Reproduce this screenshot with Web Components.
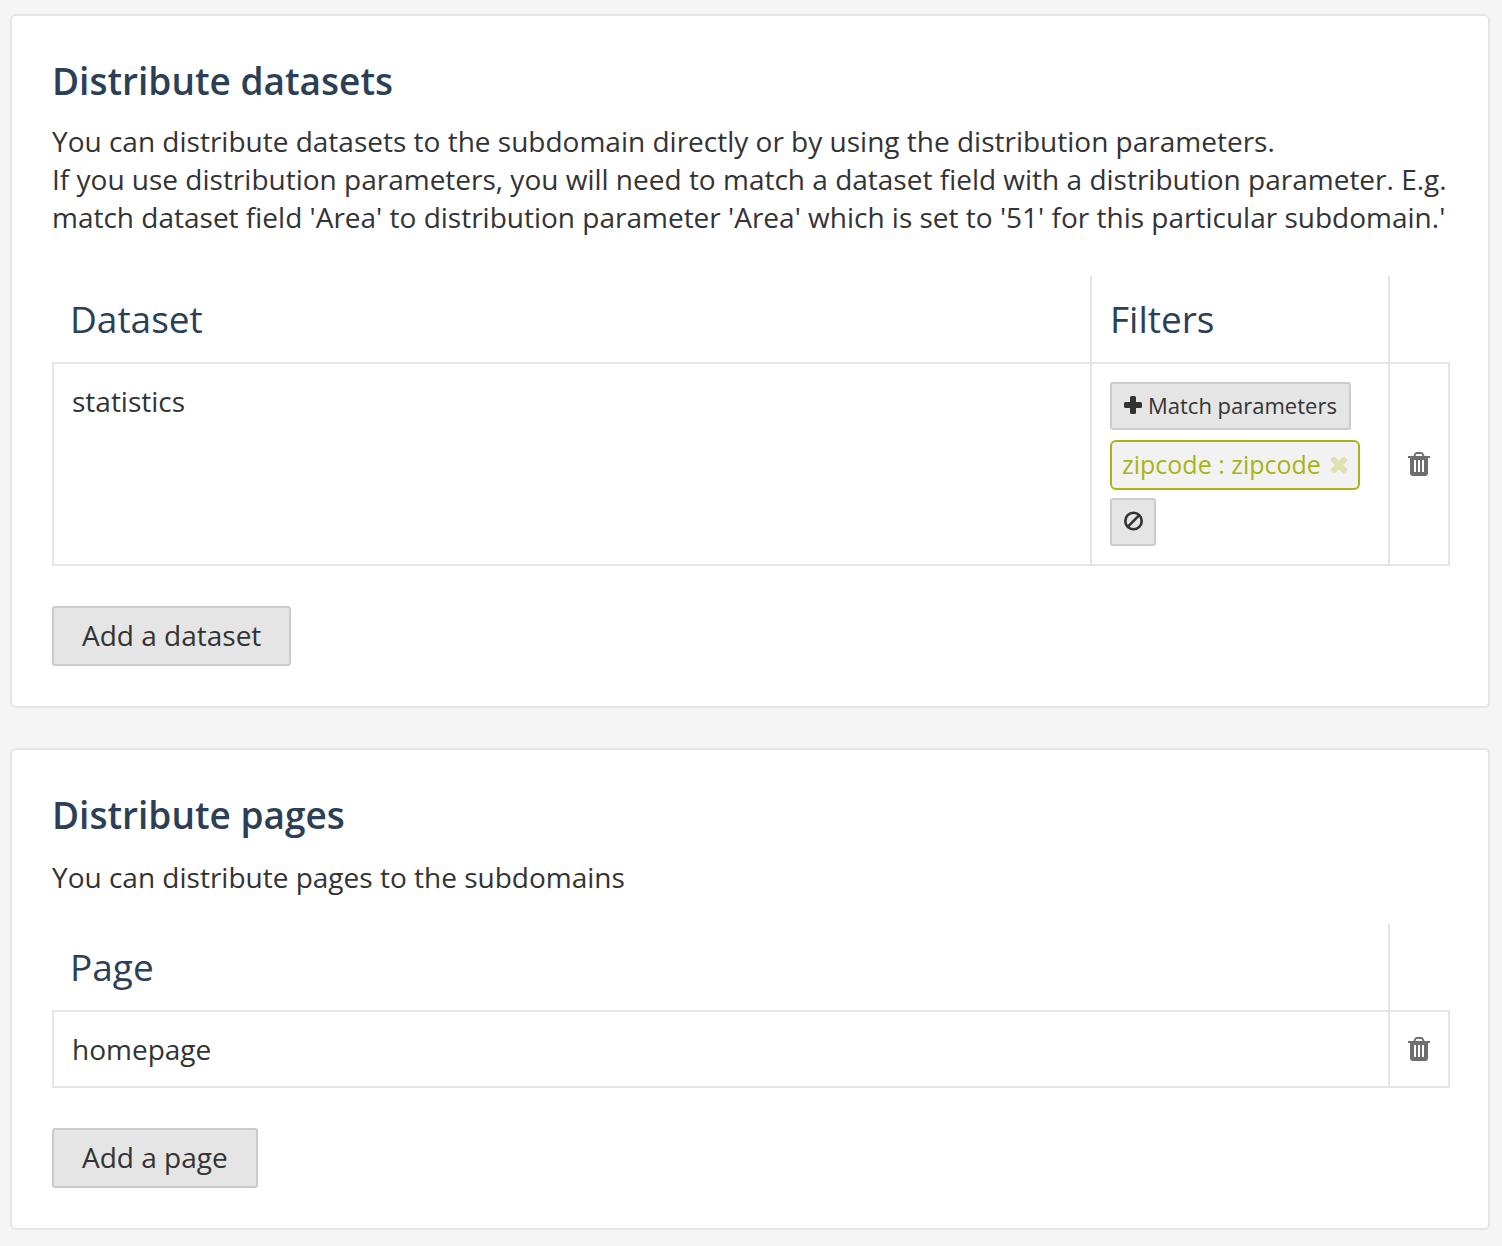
<!DOCTYPE html>
<html lang="en">
<head>
<meta charset="utf-8">
<meta name="viewport" content="width=device-width, initial-scale=1">
<title>Distribution</title>
<style>
  body {
    margin: 0;
    background: #f5f5f5;
    color: #333;
    font: 28px/38px "Open Sans", "Noto Sans", sans-serif;
  }
</style>
</head>
<body>
<distribution-page></distribution-page>

<script>
  const define = (name, html) => {
    const template = document.createElement('template');
    template.innerHTML = html;
    customElements.define(name, class extends HTMLElement {
      constructor() {
        super();
        this.attachShadow({ mode: 'open' }).append(template.content.cloneNode(true));
      }
    });
  };

  const ICONS = {
    plus: { w: 18, h: 18, body: '<path d="M7.5 0h3q1.5 0 1.5 1.500V6h4.500Q18 6 18 7.500v3q0 1.500-1.500 1.500H12v4.500q0 1.500-1.500 1.500h-3Q6 18 6 16.500V12H1.500Q0 12 0 10.500v-3Q0 6 1.500 6H6V1.500Q6 0 7.500 0z"/>' },
    times: { w: 18, h: 18, body: '<path d="M3.300.9Q4.200 0 5.100.9L9 4.800 12.900.9q.9-.9 1.800 0l2.400 2.400q.9.900 0 1.800L13.200 9l3.900 3.900q.9.900 0 1.800l-2.400 2.400q-.9.900-1.800 0L9 13.200l-3.900 3.900q-.9.900-1.800 0L.9 14.700q-.9-.9 0-1.800L4.800 9 .9 5.100Q0 4.200.9 3.300z"/>' },
    ban: { w: 18, h: 20, body: '<g fill="none" stroke="currentColor" stroke-width="2.600"><circle cx="9.500" cy="10" r="8.200"/><path d="M3.700 15.800 15.300 4.200"/></g>' },
    trash: { w: 22, h: 24, body: '<path fill-rule="evenodd" d="M0 4h5.500l1-2.500Q7.200 0 8.800 0h4.400q1.600 0 2.300 1.500l1 2.500H22v2h-2v15q0 3-3 3H5q-3 0-3-3V6H0zM7.500 4h7l-.7-1.700Q13.600 2 13.200 2H8.800q-.4 0-.6.300zM6 8v12h2V8zM10 8v12h2V8zM14 8v12h2V8z"/>' }
  };

  customElements.define('ui-icon', class extends HTMLElement {
    constructor() {
      super();
      this.attachShadow({ mode: 'open' });
    }
    connectedCallback() {
      const icon = ICONS[this.getAttribute('name')];
      this.shadowRoot.innerHTML = `
        <style>:host { display: block; flex: none; } svg { display: block; overflow: visible; }</style>
        <svg width="${icon.w}" height="${icon.h}" viewBox="0 0 ${icon.w} ${icon.h}" fill="currentColor" aria-hidden="true">${icon.body}</svg>`;
    }
  });

  define('ui-button', `
    <style>
      :host { display: flex; }
      button {
        display: flex; align-items: center; gap: 6px;
        box-sizing: border-box; margin: 0; padding: 8px 28px 10px;
        border: 2px solid #cbcbcb; border-radius: 3px;
        background: #e5e5e5; color: #333;
        font: inherit; white-space: nowrap; cursor: pointer;
      }
      :host([small]) button { padding: 5px 12px 7px; font-size: 22px; line-height: 32px; min-height: 48px; }
    </style>
    <button type="button"><slot></slot></button>`);

  customElements.define('icon-button', class extends HTMLElement {
    constructor() {
      super();
      this.attachShadow({ mode: 'open' });
    }
    connectedCallback() {
      this.shadowRoot.innerHTML = `
        <style>
          :host { display: flex; justify-content: center; color: #6e6e6e; }
          button { display: block; margin: 0; padding: 0; border: 0; background: none; color: inherit; cursor: pointer; }
        </style>
        <button type="button" aria-label="${this.getAttribute('label')}"><ui-icon name="${this.getAttribute('icon')}"></ui-icon></button>`;
    }
  });

  define('filter-tag', `
    <style>
      :host {
        display: flex; align-items: center; gap: 9px;
        padding: 4px 10px; border: 2px solid #a9b316; border-radius: 6px;
        background: #f2f2f2; color: #a9b316;
        font-size: 25px; white-space: nowrap;
      }
      span { line-height: 36px; padding-bottom: 2px; }
      icon-button { color: #dfe1b0; }
    </style>
    <span><slot></slot></span>
    <icon-button icon="times" label="Remove"></icon-button>`);

  define('section-card', `
    <style>
      :host {
        display: block; padding: 40px 38px 40px 40px;
        border: 2px solid #e5e5e5; border-radius: 6px; background: #fff;
      }
      h2 { margin: 0 0 var(--title-gap, 16px); color: #2c3f56; font-size: 37px; line-height: 50px; font-weight: 600; }
      p { margin: 0; }
      .content { margin-top: var(--content-gap, 40px); }
      .actions { display: flex; margin-top: 40px; }
    </style>
    <h2><slot name="title"></slot></h2>
    <p><slot name="description"></slot></p>
    <div class="content"><slot></slot></div>
    <div class="actions"><slot name="actions"></slot></div>`);

  const TABLE_STYLE = `
    <style>
      :host { display: block; }
      table { width: 100%; table-layout: fixed; border-collapse: separate; border-spacing: 0; }
      .filters { width: 298px; }
      .tools { width: 60px; }
      th, td { box-sizing: border-box; text-align: left; vertical-align: top; border: 0 solid #e5e5e5; }
      th { padding: 18px; border-right-width: 2px; color: #2c3f56; font-size: 37px; line-height: 50px; font-weight: 400; }
      th:last-child { border-right-width: 0; }
      td { padding: 18px; border-width: 2px 2px 2px 0; }
      td:first-child { border-left-width: 2px; }
      td:last-child { padding: 0; vertical-align: middle; }
      .stack { display: flex; flex-direction: column; align-items: flex-start; }
      .stack filter-tag { margin: 10px 0 8px; }
    </style>`;

  define('dataset-table', TABLE_STYLE + `
    <table>
      <colgroup><col><col class="filters"><col class="tools"></colgroup>
      <thead><tr><th scope="col">Dataset</th><th scope="col">Filters</th><th></th></tr></thead>
      <tbody><tr>
        <td>statistics</td>
        <td>
          <div class="stack">
            <ui-button small><ui-icon name="plus"></ui-icon>Match parameters</ui-button>
            <filter-tag>zipcode : zipcode</filter-tag>
            <ui-button small><ui-icon name="ban"></ui-icon></ui-button>
          </div>
        </td>
        <td><icon-button icon="trash" label="Delete dataset"></icon-button></td>
      </tr></tbody>
    </table>`);

  define('page-table', TABLE_STYLE + `
    <table>
      <colgroup><col><col class="tools"></colgroup>
      <thead><tr><th scope="col">Page</th><th></th></tr></thead>
      <tbody><tr>
        <td>homepage</td>
        <td><icon-button icon="trash" label="Delete page"></icon-button></td>
      </tr></tbody>
    </table>`);

  define('distribution-page', `
    <style>
      :host { display: block; }
      main { display: flex; flex-direction: column; gap: 40px; padding: 14px 12px 16px 10px; }
      .pages { --title-gap: 18px; --content-gap: 28px; }
    </style>
    <main>
      <section-card>
        <span slot="title">Distribute datasets</span>
        <span slot="description">You can distribute datasets to the subdomain directly or by using the distribution parameters.<br>If you use distribution parameters, you will need to match a dataset field with a distribution parameter. E.g. match dataset field 'Area' to distribution parameter 'Area' which is set to '51' for this particular subdomain.'</span>
        <dataset-table></dataset-table>
        <ui-button slot="actions">Add a dataset</ui-button>
      </section-card>
      <section-card class="pages">
        <span slot="title">Distribute pages</span>
        <span slot="description">You can distribute pages to the subdomains</span>
        <page-table></page-table>
        <ui-button slot="actions">Add a page</ui-button>
      </section-card>
    </main>`);
</script>
</body>
</html>
